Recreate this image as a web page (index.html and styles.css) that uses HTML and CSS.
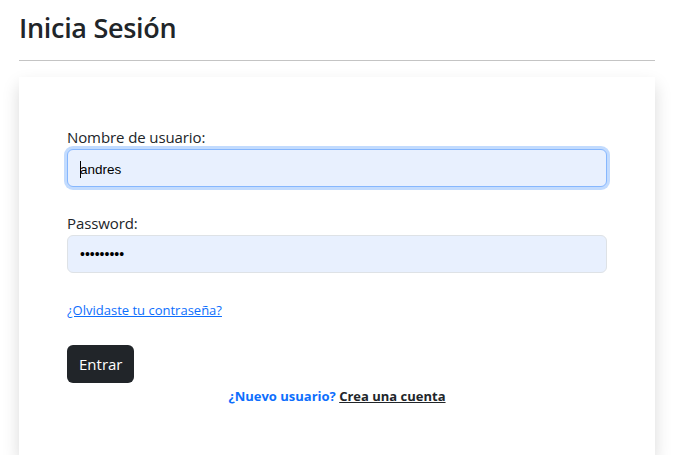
FILE: index.html
```html
<!DOCTYPE html>
<html lang="es">
<head>
<meta charset="utf-8">
<title>Inicia Sesión</title>
<link rel="stylesheet" href="styles.css">
</head>
<body>
<main class="page">
  <h2 class="title">Inicia Sesión</h2>
  <hr class="rule">
  <section class="card">
    <form class="form">
      <div class="field">
        <label class="label" for="user">Nombre de usuario:</label>
        <div class="input focused"><span class="caret"></span><span class="value">andres</span></div>
      </div>
      <div class="field">
        <label class="label" for="pass">Password:</label>
        <div class="input"><span class="value dots">•••••••••</span></div>
      </div>
      <div class="field link-row">
        <a class="forgot" href="#">¿Olvidaste tu contraseña?</a>
      </div>
      <button class="btn" type="button">Entrar</button>
      <p class="signup"><span class="new">¿Nuevo usuario?</span> <a class="create" href="#">Crea una cuenta</a></p>
    </form>
  </section>
</main>
</body>
</html>
```
FILE: styles.css
```css
* { box-sizing: border-box; }
html, body { margin: 0; background: #fff; }
body {
  font-family: "Open Sans", "Noto Sans", sans-serif;
  color: #212529;
  font-size: 16px;
  line-height: 1.5;
}
.page {
  margin: 0 22px 0 19px;
  padding-top: 12px;
}
.title {
  margin: 0;
  font-size: 27px;
  font-weight: 600;
  line-height: 1.2;
  letter-spacing: -0.3px;
}
.rule {
  margin: 16px 0 16px;
  border: 0;
  border-top: 1px solid #c4c4c4;
  height: 0;
}
.card {
  background: #fff;
  box-shadow: 0 8px 16px rgba(0,0,0,.15);
  padding: 48px;
  height: 378px;
}
.form { display: flex; flex-direction: column; }
.field { margin-bottom: 24px; display: flex; flex-direction: column; }
.label { font-size: 15px; line-height: 24px; letter-spacing: -0.1px; }
.input {
  height: 38px;
  border: 1px solid #dee2e6;
  border-radius: 6px;
  background: #e8f0fe;
  display: flex;
  align-items: center;
  padding: 0 12px;
  font-family: "Liberation Sans", Arial, sans-serif;
  font-size: 13.5px;
  color: #000;
  position: relative;
}
.input.focused {
  border-color: #86b7fe;
  box-shadow: 0 0 0 3px rgba(13,110,253,.25);
  padding-top: 3px;
}
.caret {
  width: 1px;
  height: 17px;
  background: #000;
  margin-right: -1px;
}
.dots { font-size: 14px; letter-spacing: 0; }
.forgot {
  color: #0d6efd;
  font-size: 13px;
  line-height: 22px;
  text-decoration: underline;
  align-self: flex-start;
}
.link-row { margin-top: 2px; }
.btn {
  align-self: flex-start;
  background: #212529;
  color: #fff;
  border: 0;
  border-radius: 6px;
  height: 38px;
  padding: 0 12px;
  font-family: inherit;
  font-size: 15px;
}
.signup {
  margin: 1px 0 0;
  text-align: center;
  font-size: 13px;
  font-weight: 700;
  line-height: 24px;
}
.new { color: #0d6efd; }
.create { color: #212529; text-decoration: underline; }
```
